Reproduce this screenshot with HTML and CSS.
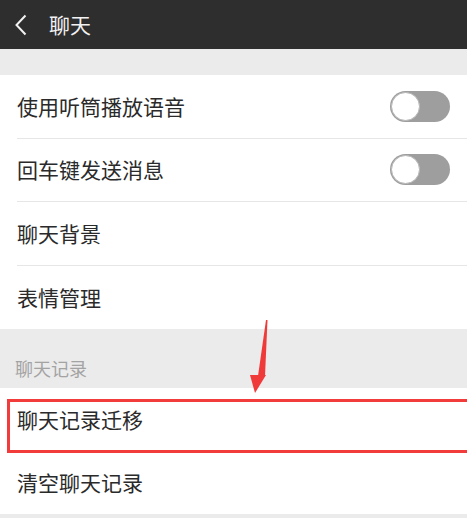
FILE: index.html
```html
<!DOCTYPE html>
<html lang="zh-CN">
<head>
<meta charset="utf-8">
<title>聊天</title>
<link rel="stylesheet" href="styles.css">
</head>
<body>
<div class="screen">
  <header class="topbar">
    <svg class="back" width="14" height="22" viewBox="0 0 14 22"><path d="M11.5 1.5 L2.5 11 L11.5 20.5" fill="none" stroke="#f2f2f2" stroke-width="2"/></svg>
    <span class="title">聊天</span>
  </header>
  <div class="gap"></div>
  <div class="group">
    <div class="row"><span class="label">使用听筒播放语音</span><span class="toggle"><span class="knob"></span></span></div>
    <div class="row"><span class="label">回车键发送消息</span><span class="toggle"><span class="knob"></span></span></div>
    <div class="row"><span class="label">聊天背景</span></div>
    <div class="row last"><span class="label">表情管理</span></div>
  </div>
  <div class="section">聊天记录</div>
  <div class="group group2">
    <div class="row"><span class="label">聊天记录迁移</span></div>
    <div class="row last"><span class="label">清空聊天记录</span></div>
  </div>
  <div class="gap bottom"></div>

  <div class="highlight"></div>
  <svg class="arrow" width="24" height="76" viewBox="0 0 24 76">
    <polygon points="20,0 21.5,0 19,56 12,56" fill="#f03a3a"/>
    <polygon points="4,55 20,55 9,73" fill="#f03a3a"/>
  </svg>
</div>
</body>
</html>
```
FILE: styles.css
```css
* { box-sizing: border-box; }
html, body { margin: 0; padding: 0; }
body {
  width: 467px;
  height: 518px;
  overflow: hidden;
  background: #ffffff;
  font-family: "Noto Sans CJK SC", "Noto Sans", sans-serif;
  color: #2a2a2a;
}
.screen { position: relative; width: 467px; height: 518px; overflow: hidden; }
.topbar {
  height: 49px;
  background: #2e2e2e;
  display: flex;
  align-items: center;
  padding-left: 14px;
}
.back { display: block; margin-right: 21px; }
.title { color: #f2f2f2; font-size: 21px; line-height: 1; }
.gap { height: 26px; background: #ebebeb; }
.gap.bottom { height: 10px; }
.group { background: #fff; padding-left: 17px; }
.row {
  height: 63.5px;
  display: flex;
  align-items: center;
  justify-content: space-between;
  padding-right: 17px;
  border-bottom: 1px solid #e6e6e6;
}
.row.last { border-bottom: none; }
.group2 .row { height: 63px; }
.label { font-size: 21px; line-height: 1; color: #2a2a2a; }
.toggle {
  width: 60px;
  height: 31px;
  border-radius: 16px;
  background: #9e9e9e;
  position: relative;
  display: block;
}
.knob {
  position: absolute;
  left: 1px;
  top: 1px;
  width: 29px;
  height: 29px;
  border-radius: 50%;
  background: #fff;
  border: 1px solid #b5b5b5;
}
.section {
  height: 59px;
  background: #ebebeb;
  padding-left: 15px;
  padding-top: 30px;
  font-size: 18px;
  line-height: 18px;
  color: #a3a3a3;
}
.highlight {
  position: absolute;
  left: 7px;
  top: 399px;
  width: 480px;
  height: 54px;
  border: 3px solid #f23b3b;
}
.arrow { position: absolute; left: 246px; top: 320px; }
```
